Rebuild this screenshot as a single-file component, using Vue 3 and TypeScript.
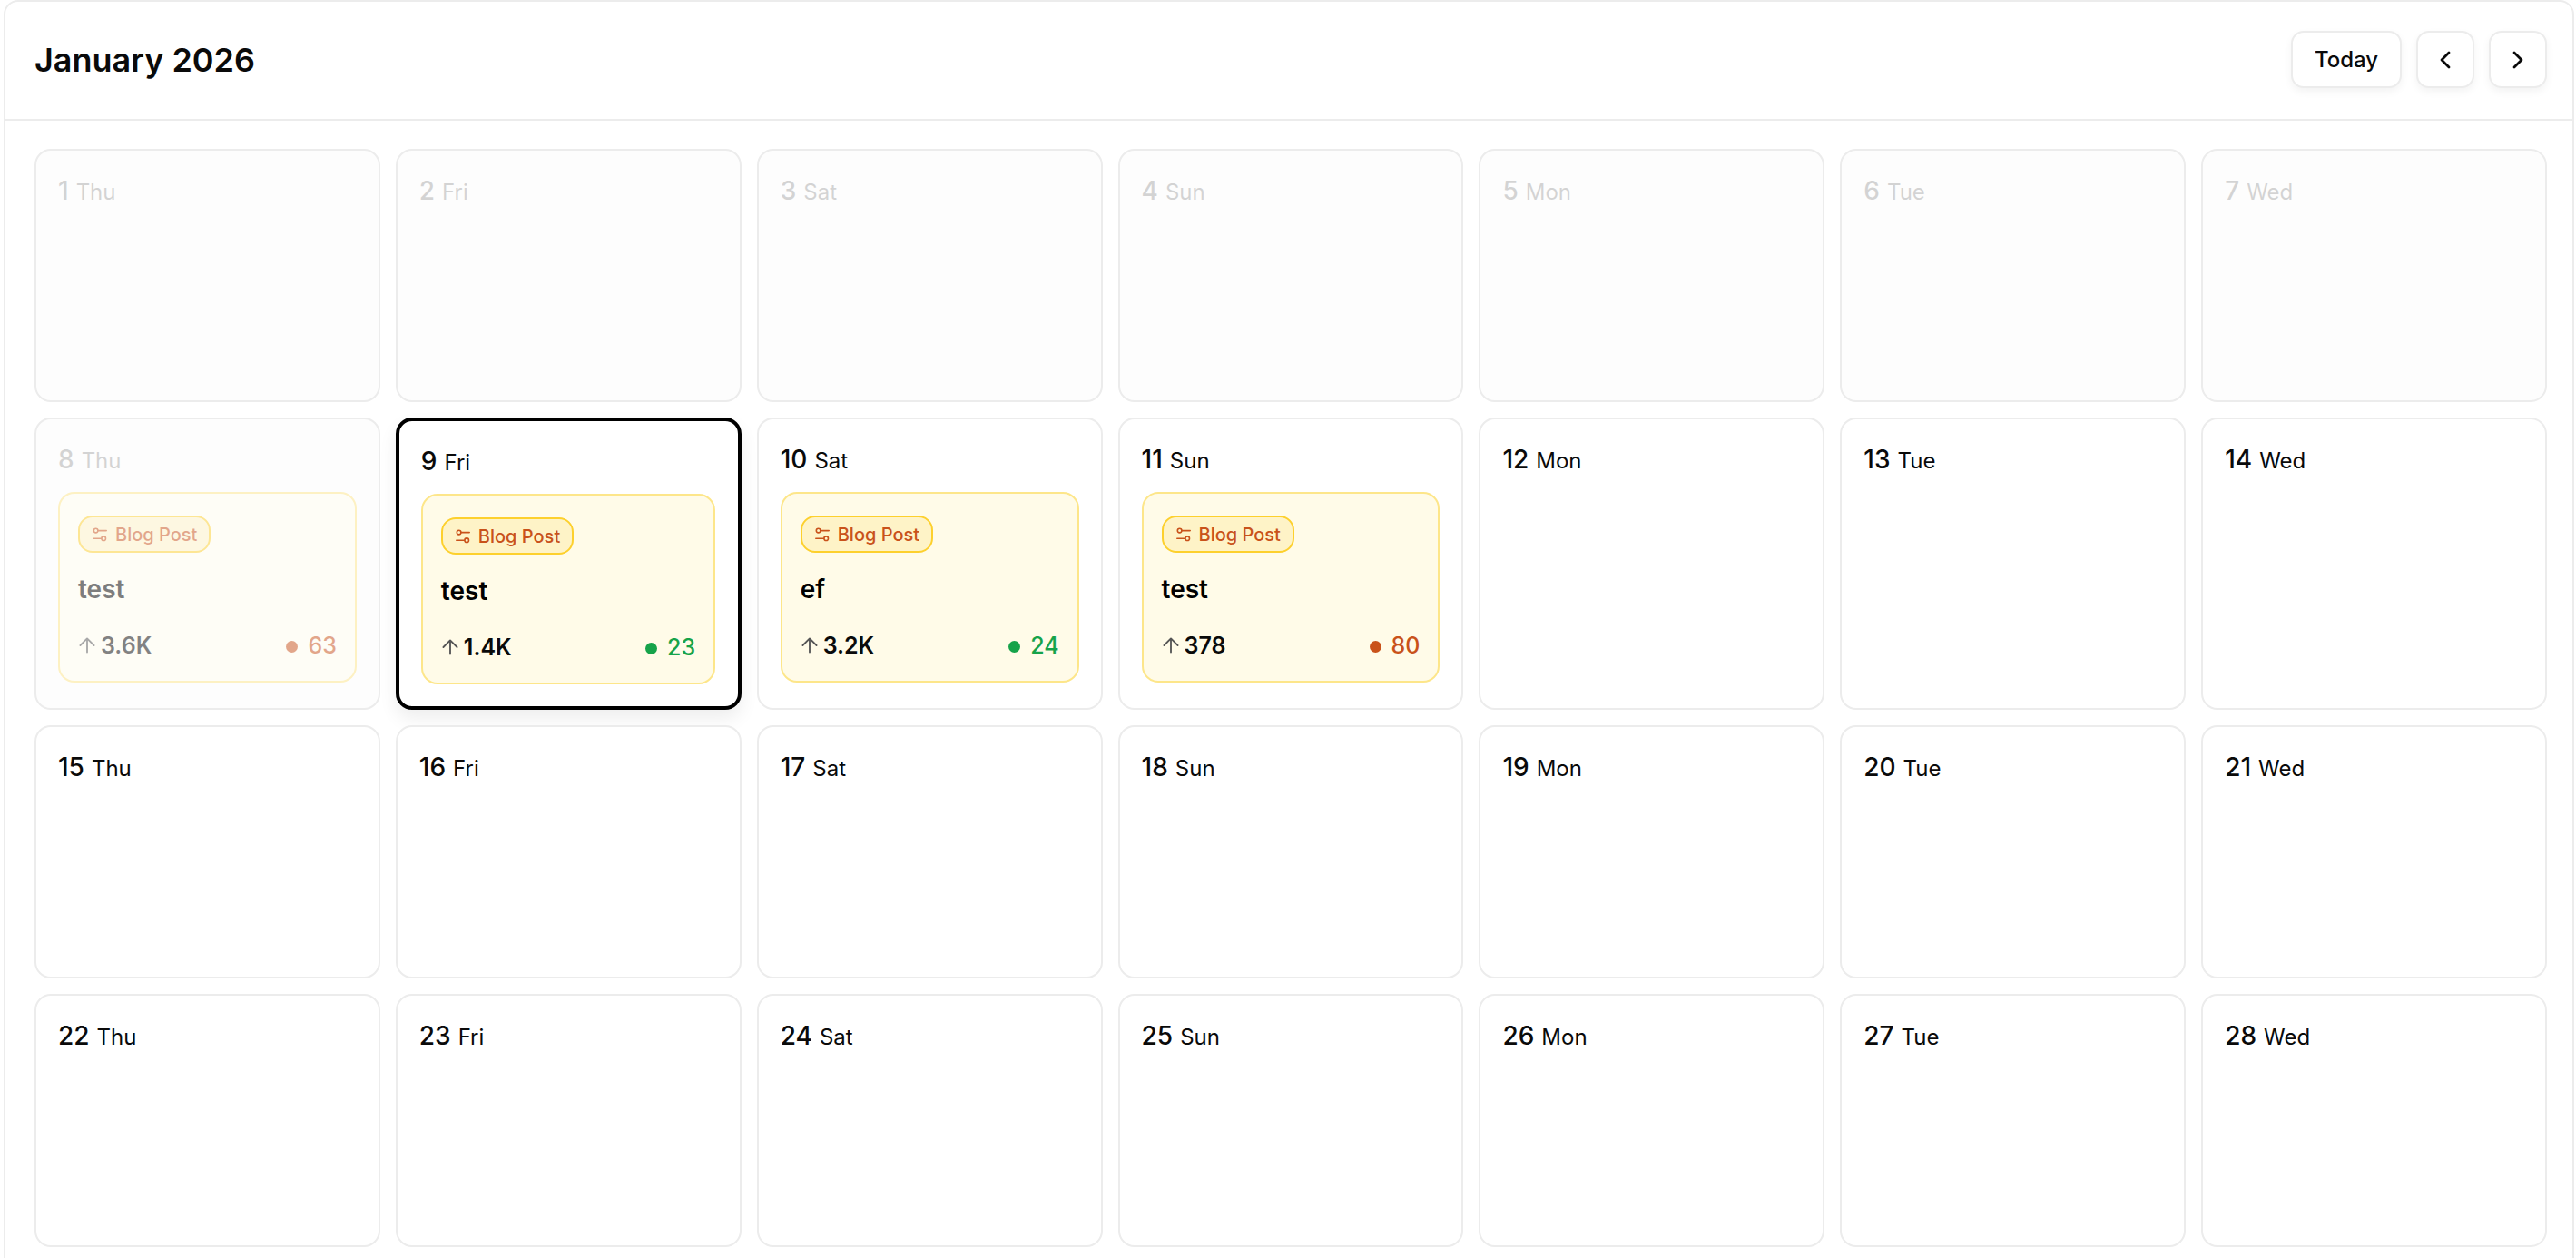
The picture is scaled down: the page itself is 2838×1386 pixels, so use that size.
<script setup lang="ts">
interface CalEvent {
  reach: string
  title: string
  score: number
  tone: 'good' | 'warn'
}
interface Day {
  date: number
  weekday: string
  past: boolean
  selected: boolean
  event?: CalEvent
}

const weekdays = ['Thu', 'Fri', 'Sat', 'Sun', 'Mon', 'Tue', 'Wed']
const events: Record<number, CalEvent> = {
  8: { reach: '3.6K', title: 'test', score: 63, tone: 'warn' },
  9: { reach: '1.4K', title: 'test', score: 23, tone: 'good' },
  10: { reach: '3.2K', title: 'ef', score: 24, tone: 'good' },
  11: { reach: '378', title: 'test', score: 80, tone: 'warn' },
}
const days: Day[] = Array.from({ length: 28 }, (_, i) => ({
  date: i + 1,
  weekday: weekdays[i % 7],
  past: i < 8,
  selected: i === 8,
  event: events[i + 1],
}))
</script>

<template>
  <div class="shell">
    <header class="top">
      <h1 class="month">January 2026</h1>
      <div class="nav">
        <button class="btn today" type="button">Today</button>
        <button class="btn square" type="button" aria-label="Previous">
          <svg width="20" height="24" viewBox="0 0 20 24"><polyline points="14,4 6,12 14,20" /></svg>
        </button>
        <button class="btn square" type="button" aria-label="Next">
          <svg width="20" height="24" viewBox="0 0 20 24"><polyline points="6,4 14,12 6,20" /></svg>
        </button>
      </div>
    </header>
    <div class="grid">
      <div
        v-for="d in days"
        :key="d.date"
        class="day"
        :class="{ past: d.past, selected: d.selected }"
      >
        <div class="label"><span class="num">{{ d.date }}</span> <span class="wd">{{ d.weekday }}</span></div>
        <article v-if="d.event" class="event">
          <span class="pill">
            <svg class="sliders" width="16" height="16" viewBox="0 0 16 16">
              <circle cx="3.6" cy="3.6" r="2.3" />
              <path d="M6 3.6h9.2" />
              <path d="M.8 12.2h8.8" />
              <circle cx="12.2" cy="12.2" r="2.3" />
            </svg>
            Blog Post
          </span>
          <h2 class="title">{{ d.event.title }}</h2>
          <div class="stats">
            <span class="reach">
              <svg width="26" height="26" viewBox="0 0 24 24"><path d="m5 12 7-7 7 7M12 19V5" /></svg>
              {{ d.event.reach }}
            </span>
            <span class="score" :class="d.event.tone"><i class="dot"></i>{{ d.event.score }}</span>
          </div>
        </article>
      </div>
    </div>
  </div>
</template>

<style scoped>
.shell {
  margin: 0 2px 0 4px;
  border: 2px solid #ececec;
  border-radius: 16px;
  background: #fff;
  font-family: Inter, "Liberation Sans", sans-serif;
  color: #0a0a0a;
}
.top {
  height: 131px;
  box-sizing: border-box;
  display: flex;
  align-items: center;
  justify-content: space-between;
  padding: 0 28px 2px 32px;
  border-bottom: 2px solid #ececec;
}
.month {
  margin: 0;
  font-size: 36px;
  line-height: 44px;
  font-weight: 600;
}
.nav {
  display: flex;
  gap: 16px;
}
.btn {
  height: 63px;
  box-sizing: border-box;
  display: flex;
  align-items: center;
  justify-content: center;
  padding: 0;
  background: #fff;
  border: 2px solid #ececec;
  border-radius: 14px;
  box-shadow: 0 4px 10px rgba(0, 0, 0, 0.05);
  font-family: inherit;
  color: #0a0a0a;
}
.today {
  width: 122px;
  font-size: 24px;
  font-weight: 500;
}
.square {
  width: 64px;
}
.square svg {
  fill: none;
  stroke: #0a0a0a;
  stroke-width: 2.8;
  stroke-linecap: round;
  stroke-linejoin: round;
}
.grid {
  display: grid;
  grid-template-columns: repeat(7, minmax(0, 1fr));
  grid-template-rows: 279px 322px 279px 279px;
  gap: 17px;
  padding: 31px 28px 32px 32px;
}
.day {
  box-sizing: border-box;
  padding: 27px 24px 0;
  border: 2px solid #ececec;
  border-radius: 18px;
  background: #fff;
}
.day.past {
  background: #fdfdfd;
}
.day.selected {
  padding: 27px 24.5px 0 24px;
  border: 4px solid #000;
  box-shadow: 0 10px 20px rgba(0, 0, 0, 0.07);
}
.label {
  height: 34px;
  display: flex;
  align-items: baseline;
  gap: 8px;
  line-height: 34px;
  white-space: nowrap;
}
.num {
  font-size: 28px;
  font-weight: 450;
}
.wd {
  font-size: 24px;
}
.past .label {
  opacity: 0.17;
}
.event {
  box-sizing: border-box;
  height: 210px;
  margin-top: 19px;
  padding: 24px 20px 0;
  display: flex;
  flex-direction: column;
  align-items: flex-start;
  border: 2px solid #fde68a;
  border-radius: 18px;
  background: #fffbe8;
}
.past .event {
  opacity: 0.5;
  background: #fffdf0;
}
.pill {
  height: 41px;
  box-sizing: border-box;
  display: flex;
  align-items: center;
  gap: 9px;
  padding: 0 13px 0 14px;
  border: 2px solid #fdd02d;
  border-radius: 16px;
  background: #fef3c7;
  color: #c9521a;
  font-size: 20px;
  font-weight: 500;
  white-space: nowrap;
}
.sliders {
  fill: none;
  stroke: currentColor;
  stroke-width: 1.6;
  stroke-linecap: round;
}
.title {
  margin: 22px 0 0;
  font-size: 28px;
  line-height: 36px;
  font-weight: 600;
  color: #000;
}
.stats {
  margin-top: auto;
  margin-bottom: 23px;
  align-self: stretch;
  display: flex;
  align-items: center;
  justify-content: space-between;
  font-size: 25px;
  line-height: 32px;
  font-weight: 500;
}
.reach {
  display: flex;
  align-items: center;
  gap: 2px;
  margin-left: -3px;
  font-weight: 600;
}
.reach svg {
  fill: none;
  stroke: #555;
  stroke-width: 1.7;
  stroke-linecap: round;
  stroke-linejoin: round;
}
.score {
  display: flex;
  align-items: center;
  gap: 11px;
}
.score.good {
  color: #16a34a;
}
.score.warn {
  color: #c9521a;
}
.dot {
  width: 13px;
  height: 13px;
  margin-top: 3px;
  border-radius: 50%;
  background: currentColor;
}
</style>

<style>
html,
body {
  margin: 0;
  overflow: hidden;
  background: #fff;
}
</style>
